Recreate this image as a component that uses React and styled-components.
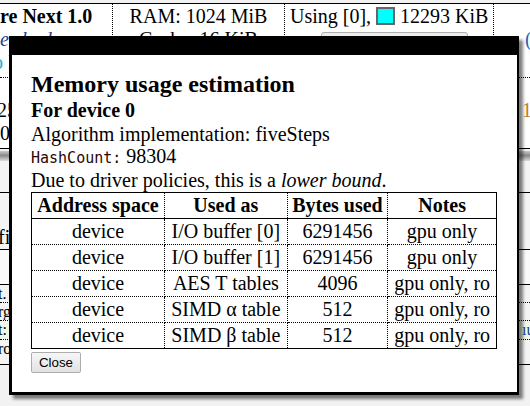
import styled, { createGlobalStyle } from "styled-components";

const GlobalStyle = createGlobalStyle`
    html, body {
        margin: 0;
        padding: 0;
        background: #fff;
    }
    body {
        width: 530px;
        height: 406px;
        overflow: hidden;
        font-family: "Liberation Serif", "Times New Roman", serif;
        font-size: 20px;
        color: #000;
    }
`

// background page (mostly hidden behind the dialog)
const StyledBackdrop = styled.div`
    position: relative;
    height: 406px;
    overflow: hidden;
    padding-top: 3px;
    box-sizing: border-box;
    background: #f2f2f2;
`
const StyledTopRow = styled.div`
    display: grid;
    grid-template-columns: 112px 172px 209px 1fr;
    height: 73px;
    background: #fff;
    border-top: 1px solid #000;
    border-bottom: 1px dotted #000;
`
const StyledCell = styled.div`
    border-left: ${props => props.$first ? 'none' : '1px dotted #000'};
    text-align: ${props => props.$align || 'left'};
    padding: 1px 0 0 ${props => props.$indent || 0}px;
    line-height: 23px;
    white-space: nowrap;
    overflow: hidden;
`
const StyledLine = styled.div`
    height: 23px;
    font-weight: ${props => props.$bold ? 'bold' : 'normal'};
    font-style: ${props => props.$italic ? 'italic' : 'normal'};
    color: ${props => props.$color || '#000'};
    text-indent: ${props => props.$shift || 0}px;
`
const StyledSwatch = styled.span`
    display: inline-block;
    width: 15px;
    height: 14px;
    background: #00ffff;
    border: 2px solid #666;
    vertical-align: -2px;
`
const StyledPickButton = styled.div`
    margin: 4px 0 0 31px;
    width: 145px;
    height: 24px;
    border: 1px solid #adadad;
    border-radius: 3px;
    background: #ececec;
`
const StyledBgRow = styled.div`
    display: flex;
    justify-content: space-between;
    align-items: ${props => props.$align || 'flex-start'};
    height: ${props => props.$h}px;
    box-sizing: border-box;
    padding-top: ${props => props.$pad || 0}px;
    background: ${props => props.$bg || '#f4f4f4'};
    border-bottom: 1px ${props => props.$line || 'solid'} #000;
    font-size: ${props => props.$small ? 16 : 20}px;
    line-height: ${props => props.$small ? 17 : 23}px;
    white-space: nowrap;
    overflow: hidden;
`
const StyledEdge = styled.div`
    width: ${props => props.$right ? '8px' : 'auto'};
    color: ${props => props.$color || '#000'};
    text-indent: ${props => props.$shift || 0}px;
    overflow: hidden;
`
const StyledShadeBar = styled.div`
    height: 10px;
    margin-top: 2px;
    background: linear-gradient(#c8c8c8, #8a8a8a 45%, #dcdcdc);
`

// dialog
const StyledDialog = styled.div`
    position: absolute;
    left: 9px;
    top: 36px;
    width: 466px;
    background: #fff;
    border: 3px solid #000;
    border-top-width: 19px;
    border-right-width: 2px;
    padding: 15px 20px 19px 19px;
    box-shadow: 4px 4px 3px rgba(0, 0, 0, 0.5);
`
const StyledTitle = styled.h2`
    margin: 0;
    font-size: 24px;
    line-height: 28px;
    font-weight: bold;
`
const StyledSubTitle = styled.h3`
    margin: 0;
    font-size: 20px;
    line-height: 25px;
    font-weight: bold;
`
const StyledText = styled.p`
    margin: 0;
    line-height: 22px;
`
const StyledCode = styled.code`
    font-family: "DejaVu Sans Mono", "Liberation Mono", monospace;
    font-size: 15px;
    color: #2a0606;
`
const StyledTable = styled.table`
    width: 100%;
    margin-top: 1px;
    border-collapse: collapse;
    table-layout: fixed;
    border: 1px solid #000;
`
const StyledCol = styled.col`
    width: ${props => props.$w}%;
`
const StyledHead = styled.th`
    padding: 0;
    line-height: 25px;
    font-weight: bold;
    text-align: center;
    border: 1px dotted #000;
    border-bottom: 1px solid #000;
`
const StyledData = styled.td`
    padding: 0;
    line-height: 25px;
    text-align: center;
    border: 1px dotted #000;
`
const StyledCloseButton = styled.button`
    display: block;
    margin-top: 3px;
    width: 50px;
    height: 21px;
    padding: 0;
    font-family: "Liberation Sans", Arial, sans-serif;
    font-size: 13.33px;
    color: #000;
    border: 1px solid #adadad;
    border-radius: 2px;
    background: linear-gradient(#f6f6f6, #e2e2e2);
`

const rows = [
    ['device', 'I/O buffer [0]', '6291456', 'gpu only'],
    ['device', 'I/O buffer [1]', '6291456', 'gpu only'],
    ['device', 'AES T tables', '4096', 'gpu only, ro'],
    ['device', 'SIMD α table', '512', 'gpu only, ro'],
    ['device', 'SIMD β table', '512', 'gpu only, ro'],
]

const App = () => {
    return (
        <>
            <GlobalStyle />
            <StyledBackdrop>
                <StyledTopRow>
                    <StyledCell $first>
                        <StyledLine $bold>re Next 1.0</StyledLine>
                        <StyledLine $italic $color="#1f3f8f">e shaders</StyledLine>
                        <StyledLine $shift={-7}><span style={{ color: '#20b0d0' }}>o</span> <span style={{ color: '#7a1a5a' }}>I</span></StyledLine>
                    </StyledCell>
                    <StyledCell $align="center">
                        <StyledLine>RAM: 1024 MiB</StyledLine>
                        <StyledLine>Cache: 16 KiB</StyledLine>
                    </StyledCell>
                    <StyledCell $indent={5}>
                        <StyledLine>Using [0], <StyledSwatch /> 12293 KiB</StyledLine>
                        <StyledPickButton />
                    </StyledCell>
                    <StyledCell $indent={31}>
                        <StyledLine />
                        <StyledLine $color="#2a5fb8">(</StyledLine>
                    </StyledCell>
                </StyledTopRow>
                <StyledBgRow $h={71} $pad={21} $bg="#fff">
                    <StyledEdge $shift={-3}>25<br />0)</StyledEdge>
                    <StyledEdge $right $color="#c08020">1</StyledEdge>
                </StyledBgRow>
                <StyledShadeBar />
                <StyledBgRow $h={32} />
                <StyledBgRow $h={57} $align="flex-end">
                    <StyledEdge $shift={-2}>fi,</StyledEdge>
                    <StyledEdge $right />
                </StyledBgRow>
                <StyledBgRow $h={35} $bg="#fafafa" />
                <StyledBgRow $h={18} $line="dotted" $small>
                    <StyledEdge $shift={-2}>t.</StyledEdge>
                    <StyledEdge $right />
                </StyledBgRow>
                <StyledBgRow $h={18} $line="dotted" $small>
                    <StyledEdge $shift={-2}>rg</StyledEdge>
                    <StyledEdge $right />
                </StyledBgRow>
                <StyledBgRow $h={19} $line="dotted" $small $bg="#eef8e8">
                    <StyledEdge $shift={-2}>t:</StyledEdge>
                    <StyledEdge $right $color="#1f3f8f">ıu</StyledEdge>
                </StyledBgRow>
                <StyledBgRow $h={25} $small>
                    <StyledEdge $shift={-2}>ro</StyledEdge>
                    <StyledEdge $right />
                </StyledBgRow>

                <StyledDialog>
                    <StyledTitle>Memory usage estimation</StyledTitle>
                    <StyledSubTitle>For device 0</StyledSubTitle>
                    <StyledText>Algorithm implementation: fiveSteps</StyledText>
                    <StyledText><StyledCode>HashCount:</StyledCode> 98304</StyledText>
                    <StyledText>Due to driver policies, this is a <i>lower bound</i>.</StyledText>
                    <StyledTable>
                        <colgroup>
                            <StyledCol $w={28.6} />
                            <StyledCol $w={26.4} />
                            <StyledCol $w={21.6} />
                            <StyledCol $w={23.4} />
                        </colgroup>
                        <thead>
                            <tr>
                                <StyledHead>Address space</StyledHead>
                                <StyledHead>Used as</StyledHead>
                                <StyledHead>Bytes used</StyledHead>
                                <StyledHead>Notes</StyledHead>
                            </tr>
                        </thead>
                        <tbody>
                            {rows.map((row, i) => (
                                <tr key={i}>
                                    {row.map((value, j) => <StyledData key={j}>{value}</StyledData>)}
                                </tr>
                            ))}
                        </tbody>
                    </StyledTable>
                    <StyledCloseButton>Close</StyledCloseButton>
                </StyledDialog>
            </StyledBackdrop>
        </>
    )
}

export default App
